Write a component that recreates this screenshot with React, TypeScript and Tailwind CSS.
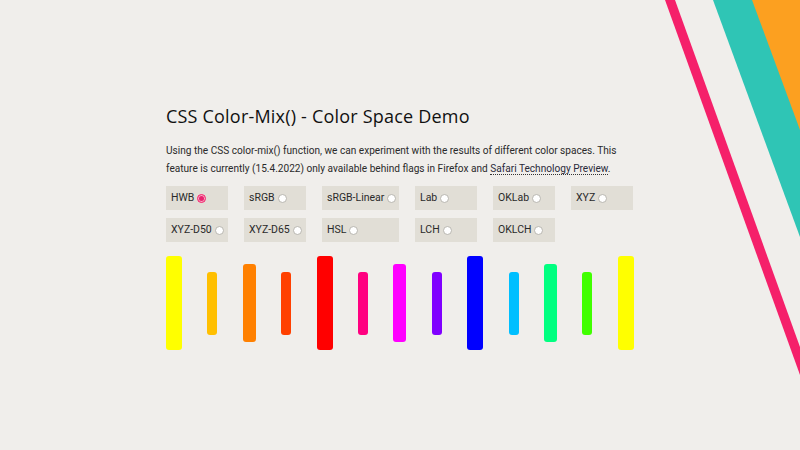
import { useState } from 'react';

const spaces = [
  'HWB', 'sRGB', 'sRGB-Linear', 'Lab', 'OKLab', 'XYZ',
  'XYZ-D50', 'XYZ-D65', 'HSL', 'LCH', 'OKLCH',
];

// width, height, colour for each bar of the mix
const bars: { w: string; h: string; c: string }[] = [
  { w: 'w-4', h: 'h-[94px]', c: 'bg-[#ffff00]' },
  { w: 'w-[10px]', h: 'h-[63px]', c: 'bg-[#ffbf00]' },
  { w: 'w-[13px]', h: 'h-[78px]', c: 'bg-[#ff8000]' },
  { w: 'w-[10px]', h: 'h-[63px]', c: 'bg-[#ff4000]' },
  { w: 'w-4', h: 'h-[94px]', c: 'bg-[#ff0000]' },
  { w: 'w-[10px]', h: 'h-[63px]', c: 'bg-[#ff0080]' },
  { w: 'w-[13px]', h: 'h-[78px]', c: 'bg-[#ff00ff]' },
  { w: 'w-[10px]', h: 'h-[63px]', c: 'bg-[#8000ff]' },
  { w: 'w-4', h: 'h-[94px]', c: 'bg-[#0000ff]' },
  { w: 'w-[10px]', h: 'h-[63px]', c: 'bg-[#00bfff]' },
  { w: 'w-[13px]', h: 'h-[78px]', c: 'bg-[#00ff80]' },
  { w: 'w-[10px]', h: 'h-[63px]', c: 'bg-[#40ff00]' },
  { w: 'w-4', h: 'h-[94px]', c: 'bg-[#ffff00]' },
];

export default function App() {
  const [space, setSpace] = useState('HWB');

  return (
    <div className="relative h-[450px] w-full overflow-hidden bg-[#f0eeeb] text-[#1f1f1f]">
      {/* corner stripes */}
      <svg className="absolute right-0 top-0" width="140" height="380" viewBox="660 0 140 380">
        <polygon points="665,0 675,0 800,347 800,375" fill="#f5206a" />
        <polygon points="713,0 800,0 800,237" fill="#2fc5b5" />
        <polygon points="752,0 800,0 800,130" fill="#fca020" />
      </svg>

      <div className="mx-auto w-[468px] pt-[104px] font-['Roboto',sans-serif]">
        <h1 className="font-['Open_Sans',sans-serif] text-[18px] leading-6 tracking-[0.2px] text-[#111]">
          CSS Color-Mix() - Color Space Demo
        </h1>

        <p className="mt-[14px] whitespace-nowrap text-[10.1px] leading-[18px] text-[#2a2a2a]">
          Using the CSS color-mix() function, we can experiment with the results of different color spaces. This
          <br />
          feature is currently (15.4.2022) only available behind flags in Firefox and{' '}
          <a className="border-b border-dotted border-[#333] text-[#2a2a3a]">Safari Technology Preview</a>.
        </p>

        <div className="mt-[8px] grid grid-cols-[62px_62px_77px_62px_62px_62px] gap-x-4 gap-y-[8px]">
          {spaces.map((s) => (
            <label
              key={s}
              className="flex h-6 cursor-pointer items-center gap-[3px] bg-[#e1ded6] pl-[5px] text-[10.5px] text-[#2a2a2a]"
            >
              {s}
              <span
                onClick={() => setSpace(s)}
                className={`flex h-[9px] w-[9px] items-center justify-center rounded-full border ${
                  space === s ? 'border-[#f5206a] bg-[#f7a8c4]' : 'border-[#b8b6b0] bg-white'
                }`}
              >
                {space === s && <span className="h-[5px] w-[5px] rounded-full bg-[#e8246e]" />}
              </span>
            </label>
          ))}
        </div>

        <div className="mt-[14px] flex h-[94px] items-center justify-between">
          {bars.map((b, i) => (
            <div key={i} className={`${b.w} ${b.h} ${b.c} rounded-[3px]`} />
          ))}
        </div>
      </div>
    </div>
  );
}
